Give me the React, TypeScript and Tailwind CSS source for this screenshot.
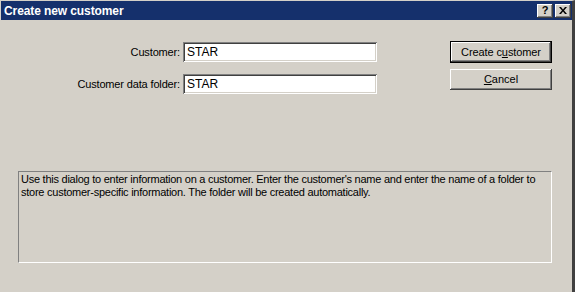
import React from 'react';

const raised =
  'shadow-[inset_-1px_-1px_#404040,inset_1px_1px_#ffffff,inset_-2px_-2px_#808080,inset_2px_2px_#d4d0c8]';
const sunken =
  'shadow-[inset_1px_1px_#808080,inset_-1px_-1px_#ffffff,inset_2px_2px_#404040,inset_-2px_-2px_#d4d0c8]';

const Field = ({ label, value }: { label: string; value: string }) => (
  <div className="flex items-center justify-end gap-[3px]">
    <span className="text-[11px] tracking-[-0.15px] text-black">{label}</span>
    <div className={`w-[194px] h-[20px] bg-white flex items-center pl-[4px] text-[12px] text-black ${sunken}`}>
      {value}
    </div>
  </div>
);

const App = () => {
  return (
    <div
      className="w-[575px] h-[292px] bg-[#d4d0c8] flex flex-col border-l border-l-[#d4d0c8] border-r-[3px] border-r-[#404040] border-t border-t-[#d4d0c8]"
      style={{ fontFamily: '"Liberation Sans", Arial, sans-serif' }}
    >
      {/* Title bar */}
      <div className="h-[19px] bg-[#15306c] flex items-center pl-[3px] pr-[1px]">
        <span className="text-white font-bold text-[12px] tracking-[-0.1px]">Create new customer</span>
        <div className="ml-auto flex gap-[2px]">
          <div className={`w-[16px] h-[14px] bg-[#d4d0c8] flex items-center justify-center text-[11px] font-bold leading-none text-black ${raised}`}>
            ?
          </div>
          <div className={`w-[16px] h-[14px] bg-[#d4d0c8] flex items-center justify-center ${raised}`}>
            <svg width="8" height="7" viewBox="0 0 8 7">
              <path d="M0 0h2l2 2.5L6 0h2L5 3.5 8 7H6L4 4.5 2 7H0l3-3.5z" fill="#000" />
            </svg>
          </div>
        </div>
      </div>

      {/* Body */}
      <div className="flex-1 flex flex-col pl-[17px]">
        <div className="flex mt-[21px]">
          <div className="w-[359px] flex flex-col gap-[12px] pt-[1px]">
            <Field label="Customer:" value="STAR" />
            <Field label="Customer data folder:" value="STAR" />
          </div>
          <div className="ml-[73px] flex flex-col gap-[6px]">
            <div className="w-[102px] h-[22px] border border-black">
              <div className={`w-full h-full flex items-center justify-center text-[11px] tracking-[-0.1px] text-black ${raised}`}>
                Create c<span className="underline">u</span>stomer
              </div>
            </div>
            <div className={`w-[102px] h-[21px] flex items-center justify-center text-[11px] text-black ${raised}`}>
              <span className="underline">C</span>ancel
            </div>
          </div>
        </div>

        <div className="mt-[77px] w-[534px] h-[92px] border-t border-l border-t-[#808080] border-l-[#808080] border-b border-r border-b-white border-r-white px-[2px] pt-[1px] text-[11px] leading-[13px] tracking-[-0.25px] text-black whitespace-nowrap">
          Use this dialog to enter information on a customer. Enter the customer's name and enter the name of a folder to
          <br />
          store customer-specific information. The folder will be created automatically.
        </div>
      </div>
    </div>
  );
};

export default App;
